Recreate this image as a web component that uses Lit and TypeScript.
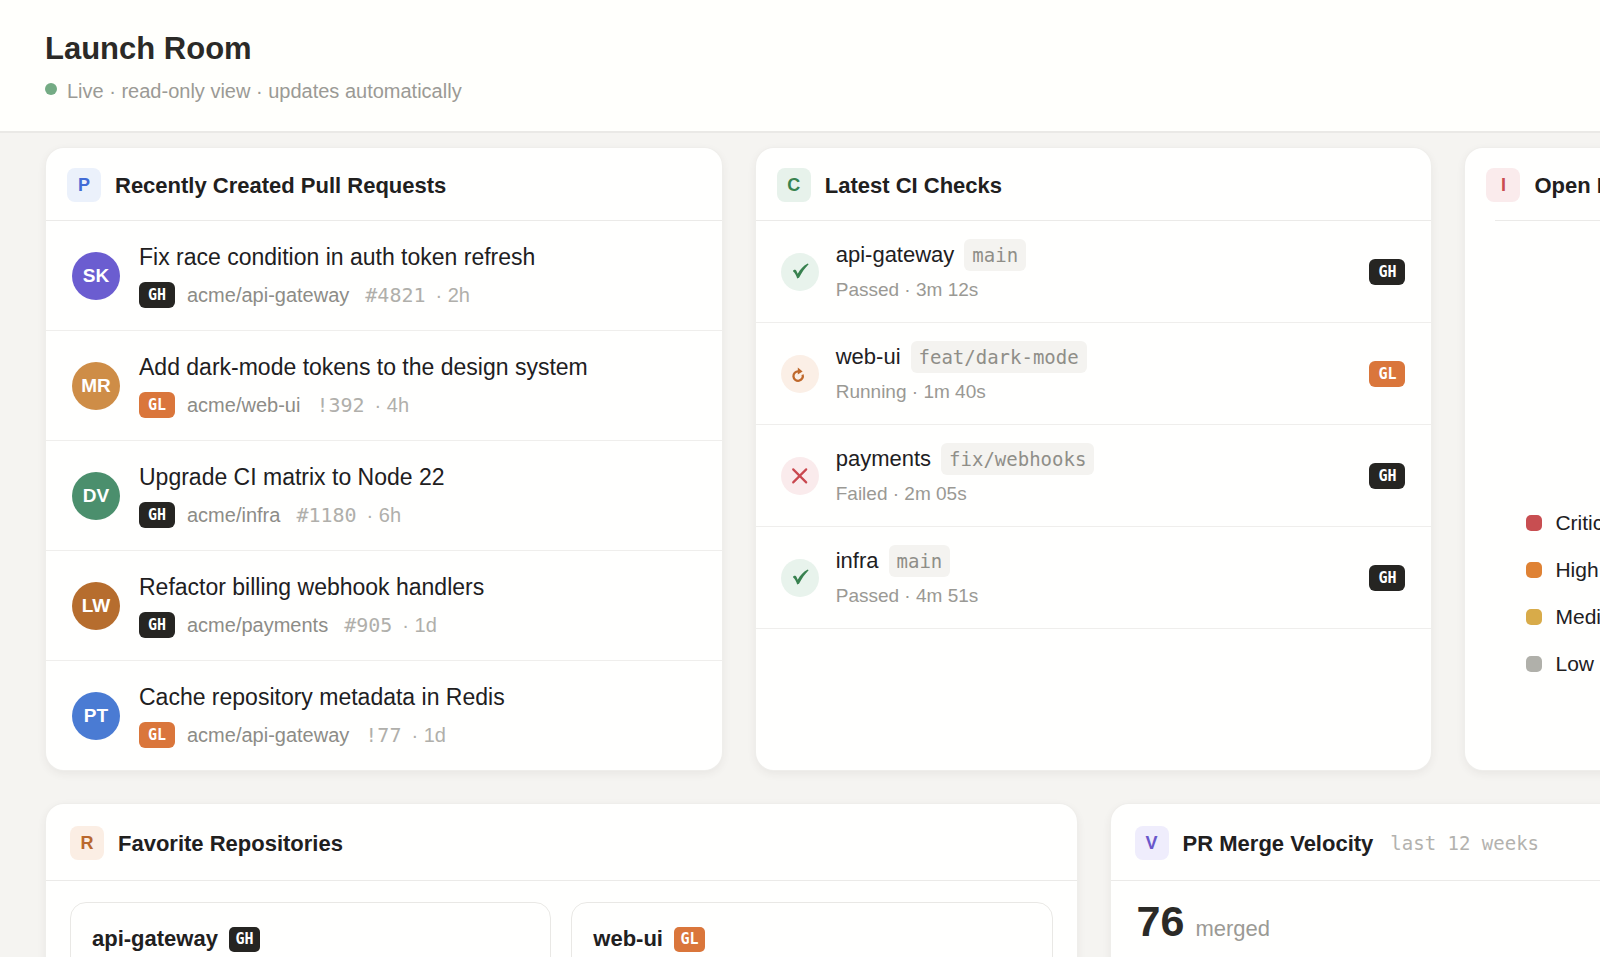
import { LitElement, html, svg, css, nothing } from "lit";
import { customElement, property } from "lit/decorators.js";

type Provider = "GH" | "GL";
type Status = "passed" | "running" | "failed";

const pullRequests: {
  initials: string; tone: string; title: string; provider: Provider; repo: string; ref: string; age: string;
}[] = [
  { initials: "SK", tone: "violet", title: "Fix race condition in auth token refresh", provider: "GH", repo: "acme/api-gateway", ref: "#4821", age: "2h" },
  { initials: "MR", tone: "amber", title: "Add dark-mode tokens to the design system", provider: "GL", repo: "acme/web-ui", ref: "!392", age: "4h" },
  { initials: "DV", tone: "green", title: "Upgrade CI matrix to Node 22", provider: "GH", repo: "acme/infra", ref: "#1180", age: "6h" },
  { initials: "LW", tone: "brown", title: "Refactor billing webhook handlers", provider: "GH", repo: "acme/payments", ref: "#905", age: "1d" },
  { initials: "PT", tone: "blue", title: "Cache repository metadata in Redis", provider: "GL", repo: "acme/api-gateway", ref: "!77", age: "1d" },
];

const checks: { repo: string; branch: string; status: Status; label: string; time: string; provider: Provider }[] = [
  { repo: "api-gateway", branch: "main", status: "passed", label: "Passed", time: "3m 12s", provider: "GH" },
  { repo: "web-ui", branch: "feat/dark-mode", status: "running", label: "Running", time: "1m 40s", provider: "GL" },
  { repo: "payments", branch: "fix/webhooks", status: "failed", label: "Failed", time: "2m 05s", provider: "GH" },
  { repo: "infra", branch: "main", status: "passed", label: "Passed", time: "4m 51s", provider: "GH" },
];

const severities = [
  { name: "Critical", tone: "critical" },
  { name: "High", tone: "high" },
  { name: "Medium", tone: "medium" },
  { name: "Low", tone: "low" },
];

const favorites: { name: string; provider: Provider }[] = [
  { name: "api-gateway", provider: "GH" },
  { name: "web-ui", provider: "GL" },
];

@customElement("provider-badge")
export class ProviderBadge extends LitElement {
  @property() provider: Provider = "GH";
  @property({ type: Boolean, reflect: true }) small = false;

  static styles = css`
    :host { display: inline-flex; flex: none; }
    .badge {
      box-sizing: border-box;
      width: 36px;
      height: 26px;
      border-radius: 6px;
      display: flex;
      align-items: center;
      justify-content: center;
      font: bold 15px/26px "DejaVu Sans Mono", monospace;
      color: #fff;
    }
    :host([small]) .badge { width: 31px; height: 25px; border-radius: 5px; line-height: 25px; }
    .GH { background: #262522; }
    .GL { background: #da763b; }
  `;

  render() {
    return html`<span class="badge ${this.provider}">${this.provider}</span>`;
  }
}

@customElement("status-icon")
export class StatusIcon extends LitElement {
  @property() status: Status = "passed";

  static styles = css`
    :host { display: block; flex: none; }
    .icon { display: block; width: 38px; height: 38px; border-radius: 50%; }
    .passed { background: #e8f3ec; color: #38814f; }
    .running { background: #fbefe6; color: #bf682b; }
    .failed { background: #faebec; color: #c9484f; }
  `;

  private glyph() {
    if (this.status === "passed") {
      return svg`<path fill="currentColor" d="M12 18.2C12.4 16.4 14.8 16.4 15.5 18L16.7 20.8C19.2 16.4 22.6 12.6 26.8 10.6L27.6 11.2C24 14.8 20.8 19.4 18 24.8L16.2 25.4C15.2 22.4 14.2 20 12 18.2Z"/>`;
    }
    if (this.status === "running") {
      return svg`<path fill="none" stroke="currentColor" stroke-width="2.3" d="M18 16.4H17.4A4.7 4.7 0 1 0 21.6 19.6"/><path fill="currentColor" d="M16.8 12.6L21.6 16.4L16.8 19.6Z"/>`;
    }
    return svg`<path fill="none" stroke="currentColor" stroke-width="2.2" stroke-linecap="round" d="M12.2 12.4L25.2 25.4M25.2 12.4L12.2 25.4"/>`;
  }

  render() {
    return html`<svg class="icon ${this.status}" viewBox="0 0 38 38" role="img" aria-label=${this.status}>${this.glyph()}</svg>`;
  }
}

@customElement("app-root")
export class AppRoot extends LitElement {
  static styles = css`
    :host {
      display: block;
      height: 100vh;
      overflow: hidden;
      background: #f5f4f1;
      color: #21201e;
      font-family: "Liberation Sans", Arial, sans-serif;
    }
    * { box-sizing: border-box; }
    h1, h2, h3, p, ul { margin: 0; padding: 0; }
    ul { list-style: none; }

    .top {
      background: #fffffc;
      border-bottom: 2px solid #eae9e6;
      padding: 29px 45px 26px;
    }
    .top h1 { font-size: 31px; line-height: 40px; color: #2b2a27; }
    .live {
      display: flex;
      align-items: center;
      gap: 10px;
      margin-top: 8px;
      font-size: 20px;
      line-height: 28px;
      color: #9b9a95;
    }
    .dot { width: 12px; height: 12px; margin-bottom: 4px; border-radius: 50%; background: #74ab84; }

    .board {
      width: 136.7%;
      padding: 15px 46px 46px;
      display: grid;
      grid-template-columns: repeat(6, minmax(0, 1fr));
      gap: 34px;
    }
    .card {
      grid-column: span 2;
      display: flex;
      flex-direction: column;
      background: #fffffe;
      border-radius: 18px;
      box-shadow: 0 0 0 1px #efeeeb, 0 3px 10px rgba(60, 56, 46, 0.08);
      overflow: hidden;
    }
    .wide { grid-column: span 3; }

    .head {
      display: flex;
      align-items: center;
      gap: 14px;
      padding: 20px 21px 18px;
      border-bottom: 1px solid #ebeae8;
    }
    .wide .head { padding: 22px 24px 20px; }
    .head h2 { padding-top: 2px; font-size: 22px; line-height: 32px; }
    .tile {
      width: 34px;
      height: 34px;
      border-radius: 8px;
      text-align: center;
      font-size: 18px;
      line-height: 34px;
      font-weight: bold;
    }
    .tile.p { background: #ebf1fb; color: #426cd6; }
    .tile.c { background: #e7f2eb; color: #37834f; }
    .tile.i { background: #faebec; color: #ca4c52; }
    .tile.r { background: #fbeee4; color: #b9682e; }
    .tile.v { background: #efedfc; color: #6a57ca; }
    .range { margin-left: 3px; font: 19px/34px "DejaVu Sans Mono", monospace; color: #b3b2ae; }

    .pr {
      display: flex;
      align-items: center;
      gap: 19px;
      padding: 21px 26px 20px;
      border-bottom: 1px solid #efeeec;
    }
    .pr:last-child { border-bottom: 0; }
    .avatar {
      flex: none;
      width: 48px;
      height: 48px;
      border-radius: 50%;
      text-align: center;
      font-size: 19px;
      line-height: 48px;
      font-weight: bold;
      color: #fff;
    }
    .violet { background: #6b5dd0; }
    .amber { background: #ce8d47; }
    .green { background: #4b8f6d; }
    .brown { background: #b66d2e; }
    .blue { background: #4a7bd3; }
    .pr h3 { font-size: 23px; font-weight: normal; line-height: 30px; }
    .meta { display: flex; align-items: center; margin-top: 8px; line-height: 30px; font-size: 20px; color: #8d8c87; }
    .meta .repo { margin-left: 12px; }
    .ref { margin: 0 10px 0 16px; font: 20px/30px "DejaVu Sans Mono", monospace; color: #b0afab; }
    .age { color: #b0afab; }

    .check {
      display: flex;
      align-items: center;
      gap: 17px;
      padding: 18px 26px 18px 25px;
      border-bottom: 1px solid #efeeec;
    }
    .what { flex: 1; }
    .name { display: flex; align-items: center; gap: 10px; font-size: 22px; line-height: 32px; }
    .branch {
      padding: 0 8px;
      border-radius: 6px;
      background: #f4f3f0;
      font: 19px/32px "DejaVu Sans Mono", monospace;
      color: #8f8e88;
    }
    .result { margin-top: 5px; font-size: 19px; line-height: 28px; color: #9a9994; }

    .issues .head {
      padding-bottom: 19px;
      border-bottom: 0;
      background: linear-gradient(#ebeae8, #ebeae8) 30px 100% / 100% 1px no-repeat;
    }
    .legend { margin-top: auto; padding: 0 61px 91px; display: grid; gap: 17px; }
    .legend li { display: flex; align-items: center; gap: 13px; font-size: 21px; line-height: 30px; }
    .swatch { width: 16px; height: 16px; border-radius: 5px; }
    .critical { background: #c84e51; }
    .high { background: #df8234; }
    .medium { background: #d8ab49; }
    .low { background: #b0b0aa; }

    .repos { display: grid; grid-template-columns: 1fr 1fr; gap: 20px; padding: 21px 24px; }
    .repo-card {
      display: flex;
      align-items: center;
      gap: 11px;
      padding: 20px 21px 100px;
      border: 1px solid #e9e8e5;
      border-radius: 16px;
    }
    .repo-card h3 { font-size: 22px; line-height: 32px; }
    .total { display: flex; align-items: baseline; gap: 11px; padding: 15px 26px; }
    .total strong { font-size: 43px; line-height: 50px; color: #2b2a27; }
    .total span { font-size: 22px; color: #9b9a95; }
  `;

  private head(letter: string, title: string, range?: string) {
    return html`<header class="head">
      <span class="tile ${letter.toLowerCase()}">${letter}</span>
      <h2>${title}</h2>
      ${range ? html`<span class="range">${range}</span>` : nothing}
    </header>`;
  }

  render() {
    return html`
      <header class="top">
        <h1>Launch Room</h1>
        <p class="live"><span class="dot"></span>Live · read-only view · updates automatically</p>
      </header>
      <main class="board">
        <section class="card">
          ${this.head("P", "Recently Created Pull Requests")}
          <ul>
            ${pullRequests.map((pr) => html`<li class="pr">
              <span class="avatar ${pr.tone}">${pr.initials}</span>
              <div>
                <h3>${pr.title}</h3>
                <div class="meta">
                  <provider-badge .provider=${pr.provider}></provider-badge>
                  <span class="repo">${pr.repo}</span>
                  <span class="ref">${pr.ref}</span>
                  <span class="age">· ${pr.age}</span>
                </div>
              </div>
            </li>`)}
          </ul>
        </section>
        <section class="card">
          ${this.head("C", "Latest CI Checks")}
          <ul>
            ${checks.map((c) => html`<li class="check">
              <status-icon .status=${c.status}></status-icon>
              <div class="what">
                <div class="name">${c.repo}<span class="branch">${c.branch}</span></div>
                <div class="result">${c.label} · ${c.time}</div>
              </div>
              <provider-badge .provider=${c.provider}></provider-badge>
            </li>`)}
          </ul>
        </section>
        <section class="card issues">
          ${this.head("I", "Open Issues")}
          <ul class="legend">
            ${severities.map((s) => html`<li><span class="swatch ${s.tone}"></span>${s.name}</li>`)}
          </ul>
        </section>
        <section class="card wide">
          ${this.head("R", "Favorite Repositories")}
          <div class="repos">
            ${favorites.map((f) => html`<article class="repo-card">
              <h3>${f.name}</h3>
              <provider-badge small .provider=${f.provider}></provider-badge>
            </article>`)}
          </div>
        </section>
        <section class="card wide">
          ${this.head("V", "PR Merge Velocity", "last 12 weeks")}
          <p class="total"><strong>76</strong><span>merged</span></p>
        </section>
      </main>
    `;
  }
}
